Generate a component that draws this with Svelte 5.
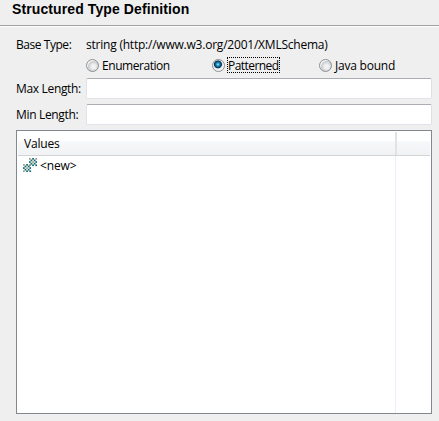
<script>
  const options = ['Enumeration', 'Patterned', 'Java bound'];
  let selected = $state('Patterned');
  let max = $state('');
  let min = $state('');
  // T = teal, G = taupe
  const tile = ['G.T.G', '.T.T.', 'T.G.T', '.T.T.', 'G.T.T'];
  const colors = { T: '#0b6670', G: '#a09a84' };
</script>

<main>
  <header><h1>Structured Type Definition</h1></header>
  <section>
    <div class="row base"><span class="label bt">Base Type:</span><span class="uri">string (http://www.w3.org/2001/XMLSchema)</span></div>
    <div class="radios">
      {#each options as option, i}
        <button class="option o{i}" onclick={() => (selected = option)}>
          <span class="radio" class:on={selected === option}></span>
          <span class="caption" class:focus={selected === option}>{option}</span>
        </button>
      {/each}
    </div>
    <label class="row field"><span class="label max">Max Length:</span><input bind:value={max} /></label>
    <label class="row field"><span class="label min">Min Length:</span><input bind:value={min} /></label>
    <div class="table">
      <div class="thead"><span class="values">Values</span><i></i></div>
      <div class="body">
        <div class="items">
          <svg width="14" height="14" viewBox="0 0 14 14">
            {#each [[6, 0], [0, 6]] as [ox, oy]}
              {#each tile as line, y}
                {#each line.split('') as c, x}
                  {#if c !== '.'}<rect x={ox + x * 1.6} y={oy + y * 1.6} width="1.7" height="1.7" fill={colors[c]} />{/if}
                {/each}
              {/each}
            {/each}
          </svg>
          <span class="new">&lt;new&gt;</span>
        </div>
      </div>
    </div>
  </section>
</main>

<style>
  :global(body) { margin: 0; background: #efefef; }
  * { box-sizing: border-box; }
  main { width: 439px; height: 421px; overflow: hidden; background: #efefef; color: #000; font: 12px/16px "Open Sans", "Noto Sans", sans-serif; white-space: nowrap; }
  header { height: 27px; border-bottom: 1px solid #fff; box-shadow: inset 0 -1px #a0a0a0; padding: 1px 0 0 12px; }
  h1 { margin: 0; font: bold 14px/16px "Liberation Sans", Arial, sans-serif; letter-spacing: .1px; }
  section { padding: 10px 7px 0 16px; }
  .row { display: flex; }
  .base { height: 20px; }
  .label { width: 70px; flex: none; }
  .bt { letter-spacing: -.45px; }
  .uri { letter-spacing: -.22px; }
  .max, .min { letter-spacing: -.33px; }
  .radios { display: flex; height: 21px; padding-left: 70px; }
  .option { display: flex; align-items: flex-start; border: 0; padding: 0; margin: 0; background: none; font: inherit; color: inherit; outline: none; letter-spacing: -.22px; }
  .o0 { width: 126px; letter-spacing: -.45px; }
  .o1 { width: 107px; letter-spacing: -.55px; }
  .radio { width: 13px; height: 13px; margin: 2px 2px 0 0; border: 1px solid #8e8f8f; border-radius: 50%; background: radial-gradient(circle at 60% 60%, #f2f2f2 0 20%, #c9cdd1 55%, #f4f4f4 65%); }
  .radio.on { background: radial-gradient(circle at 45% 40%, #b5efff 0, #35a6d5 13%, #10608d 28%, #0b3151 40%, #d8e0e5 48%, #f4f4f4 60%); }
  .caption { height: 16px; line-height: 15px; border: 1px solid transparent; }
  .focus { border: 1px dotted #000; }
  .field { height: 26px; }
  .label.max, .label.min { padding-top: 3px; }
  input { width: 346px; height: 21px; border: 1px solid #e2e3ea; border-top-color: #abadb3; border-right-color: #dbdfe6; border-radius: 2px; background: #fff; padding: 1px 4px; font: inherit; outline: none; }
  .table { width: 416px; height: 284px; border: 1px solid #828790; background: #fff; padding: 1px; }
  .thead { height: 24px; display: flex; border-bottom: 1px solid #d5d5d5; background: linear-gradient(#fff 0 9px, #f7f8fa 9px, #f1f2f4); }
  .values { width: 377px; padding: 4px 0 0 6px; letter-spacing: -.2px; }
  i { width: 2px; background: #e2e3e4; }
  .body { height: 257px; display: flex; }
  .items { width: 378px; border-right: 1px solid #e8f1fb; display: flex; padding: 2px 0 0 5px; }
  .new { margin-left: 3px; letter-spacing: -.15px; }
</style>
